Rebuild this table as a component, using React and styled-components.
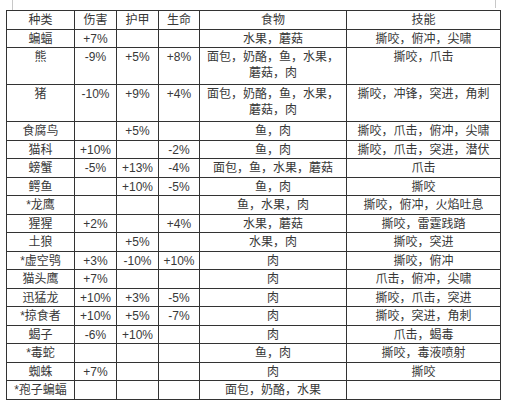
import styled, { createGlobalStyle } from "styled-components";

const rows = [
  { name: "蝙蝠", dmg: "+7%", armor: "", hp: "", food: "水果，蘑菇", skill: "撕咬，俯冲，尖啸" },
  { name: "熊", dmg: "-9%", armor: "+5%", hp: "+8%", food: "面包，奶酪，鱼，水果，蘑菇，肉", skill: "撕咬，爪击", tall: true },
  { name: "猪", dmg: "-10%", armor: "+9%", hp: "+4%", food: "面包，奶酪，鱼，水果，蘑菇，肉", skill: "撕咬，冲锋，突进，角刺", tall: true },
  { name: "食腐鸟", dmg: "", armor: "+5%", hp: "", food: "鱼，肉", skill: "撕咬，爪击，俯冲，尖啸" },
  { name: "猫科", dmg: "+10%", armor: "", hp: "-2%", food: "鱼，肉", skill: "撕咬，爪击，突进，潜伏" },
  { name: "螃蟹", dmg: "-5%", armor: "+13%", hp: "-4%", food: "面包，鱼，水果，蘑菇", skill: "爪击" },
  { name: "鳄鱼", dmg: "", armor: "+10%", hp: "-5%", food: "鱼，肉", skill: "撕咬" },
  { name: "*龙鹰", dmg: "", armor: "", hp: "", food: "鱼，水果，肉", skill: "撕咬，俯冲，火焰吐息" },
  { name: "猩猩", dmg: "+2%", armor: "", hp: "+4%", food: "水果，蘑菇", skill: "撕咬，雷霆践踏" },
  { name: "土狼", dmg: "", armor: "+5%", hp: "", food: "水果，肉", skill: "撕咬，突进" },
  { name: "*虚空鸮", dmg: "+3%", armor: "-10%", hp: "+10%", food: "肉", skill: "撕咬，俯冲" },
  { name: "猫头鹰", dmg: "+7%", armor: "", hp: "", food: "肉", skill: "爪击，俯冲，尖啸" },
  { name: "迅猛龙", dmg: "+10%", armor: "+3%", hp: "-5%", food: "肉", skill: "撕咬，爪击，突进" },
  { name: "*掠食者", dmg: "+10%", armor: "+5%", hp: "-7%", food: "肉", skill: "撕咬，突进，角刺" },
  { name: "蝎子", dmg: "-6%", armor: "+10%", hp: "", food: "肉", skill: "爪击，蝎毒" },
  { name: "*毒蛇", dmg: "", armor: "", hp: "", food: "鱼，肉", skill: "撕咬，毒液喷射" },
  { name: "蜘蛛", dmg: "+7%", armor: "", hp: "", food: "肉", skill: "撕咬" },
  { name: "*孢子蝙蝠", dmg: "", armor: "", hp: "", food: "面包，奶酪，水果", skill: "" },
];

const GlobalStyle = createGlobalStyle`
  body {
    margin: 0;
    background: #fff;
    font-family: "Liberation Sans", "Noto Sans CJK SC", sans-serif;
  }
`;

const Page = styled.div`
  width: 510px;
  height: 400px;
  overflow: hidden;
  background: #fff;
`;

const PageEdge = styled.div`
  height: 10px;
  display: flex;
  justify-content: space-between;
  padding: 0 14px 0 12px;
`;

const Tick = styled.span`
  width: 1px;
  height: ${(p) => p.$h}px;
  background: #c8c8c8;
`;

const Table = styled.table`
  margin-left: 6px;
  width: 495px;
  table-layout: fixed;
  border-collapse: collapse;
  border: 1px solid #333;
  color: #383838;
  font-size: 12px;
`;

const Row = styled.tr`
  height: ${(p) => (p.$tall ? 37 : 18.5)}px;
`;

const Cell = styled.td`
  border: 1px solid #333;
  padding: 1px 3px 0;
  line-height: 16px;
  text-align: center;
  vertical-align: top;
  white-space: ${(p) => (p.$wrap ? "normal" : "nowrap")};
  overflow: hidden;
`;

const HeadCell = styled(Cell).attrs({ as: "th" })`
  font-weight: normal;
`;

export default function App() {
  return (
    <Page>
      <GlobalStyle />
      <PageEdge>
        <Tick $h={10} />
        <Tick $h={8} />
      </PageEdge>
      <Table>
        <colgroup>
          <col style={{ width: 68 }} />
          <col style={{ width: 42 }} />
          <col style={{ width: 42 }} />
          <col style={{ width: 41 }} />
          <col style={{ width: 147 }} />
          <col style={{ width: 154 }} />
        </colgroup>
        <thead>
          <Row>
            <HeadCell>种类</HeadCell>
            <HeadCell>伤害</HeadCell>
            <HeadCell>护甲</HeadCell>
            <HeadCell>生命</HeadCell>
            <HeadCell>食物</HeadCell>
            <HeadCell>技能</HeadCell>
          </Row>
        </thead>
        <tbody>
          {rows.map((r) => (
            <Row key={r.name} $tall={r.tall}>
              <Cell>{r.name}</Cell>
              <Cell>{r.dmg}</Cell>
              <Cell>{r.armor}</Cell>
              <Cell>{r.hp}</Cell>
              <Cell $wrap>{r.food}</Cell>
              <Cell>{r.skill}</Cell>
            </Row>
          ))}
        </tbody>
      </Table>
    </Page>
  );
}
